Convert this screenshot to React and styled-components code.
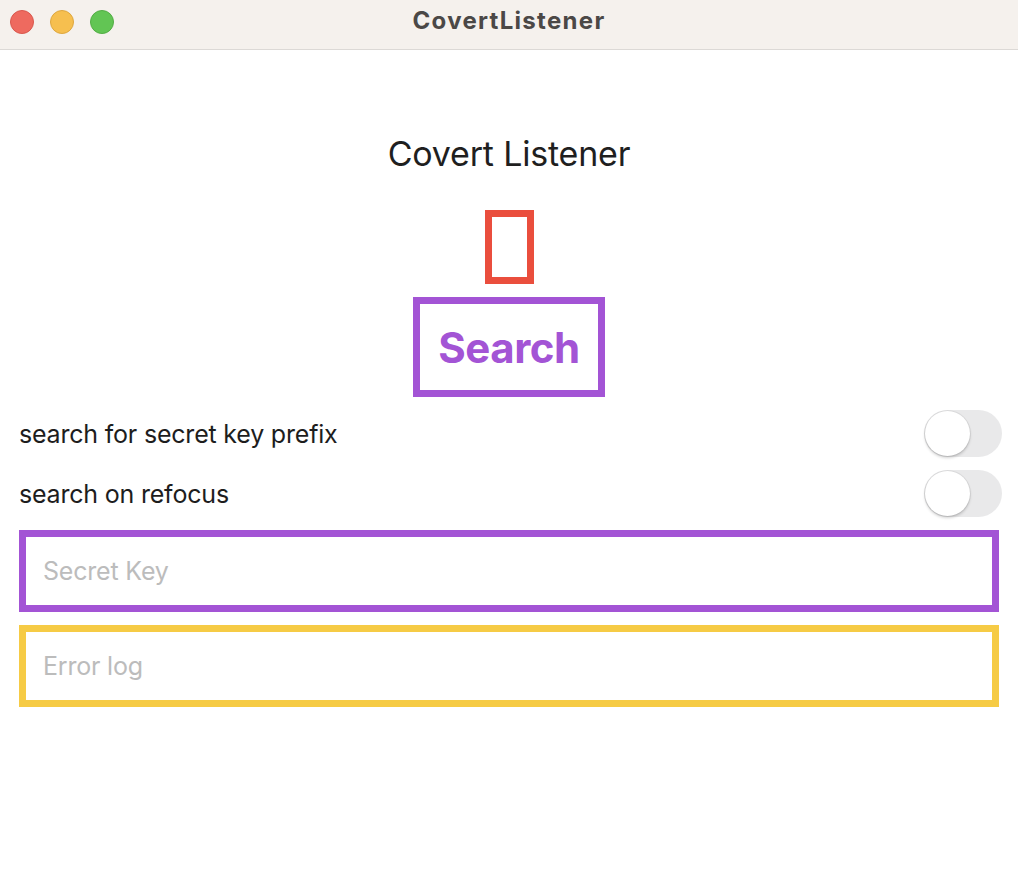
import { useState } from "react";
import styled, { createGlobalStyle } from "styled-components";

const GlobalStyle = createGlobalStyle`
  html, body {
    margin: 0;
    padding: 0;
    background: #ffffff;
  }
  body {
    font-family: Inter, "Liberation Sans", sans-serif;
    -webkit-font-smoothing: antialiased;
  }
`;

const Window = styled.div`
  width: 1018px;
  height: 876px;
  display: flex;
  flex-direction: column;
  background: #ffffff;
  overflow: hidden;
`;

const TitleBar = styled.div`
  height: 50px;
  flex-shrink: 0;
  display: flex;
  align-items: center;
  position: relative;
  background: #f5f1ed;
  border-bottom: 1px solid #dcd9d6;
  box-sizing: border-box;
`;

const Lights = styled.div`
  display: flex;
  gap: 16px;
  padding-left: 10px;
  margin-top: -6px;
`;

const Light = styled.span`
  width: 24px;
  height: 24px;
  border-radius: 50%;
  box-sizing: border-box;
  background: ${(p) => p.$color};
  border: 1px solid ${(p) => p.$edge};
`;

const WindowTitle = styled.div`
  position: absolute;
  left: 0;
  right: 0;
  top: 6px;
  text-align: center;
  font-size: 24px;
  font-weight: 700;
  color: #4b4846;
  letter-spacing: 1.3px;
`;

const Content = styled.main`
  display: flex;
  flex-direction: column;
  align-items: center;
  gap: 13px;
  padding: 83px 19px 0;
`;

const Heading = styled.h1`
  margin: 0 0 22px;
  font-size: 34px;
  font-weight: 400;
  line-height: 42px;
  color: #1f1f1f;
  letter-spacing: -0.2px;
`;

const Placeholder = styled.div`
  width: 49px;
  height: 74px;
  box-sizing: border-box;
  border: 7px solid #ea4e3d;
`;

const SearchButton = styled.button`
  width: 192px;
  height: 100px;
  box-sizing: border-box;
  border: 7px solid #a354d5;
  background: #ffffff;
  color: #a354d5;
  font-family: Inter, "Liberation Sans", sans-serif;
  font-size: 42px;
  font-weight: 700;
  letter-spacing: -0.5px;
  cursor: pointer;
  padding: 0;
`;

const Row = styled.label`
  align-self: stretch;
  display: flex;
  align-items: center;
  justify-content: space-between;
  height: 47px;
  font-size: 25px;
  color: #1d1d1d;
  letter-spacing: -0.2px;
  margin-right: -3px;
`;

const Track = styled.span`
  width: 78px;
  height: 47px;
  border-radius: 24px;
  box-sizing: border-box;
  background: ${(p) => (p.$on ? "#a354d5" : "#e9e9ea")};
  display: flex;
  align-items: center;
  justify-content: ${(p) => (p.$on ? "flex-end" : "flex-start")};
  padding: 1px;
  cursor: pointer;
`;

const Knob = styled.span`
  width: 45px;
  height: 45px;
  border-radius: 50%;
  background: #ffffff;
  box-shadow: 0 0 0 1px rgba(0, 0, 0, 0.06), 0 2px 3px rgba(0, 0, 0, 0.18);
`;

const Field = styled.input`
  align-self: stretch;
  height: 82px;
  box-sizing: border-box;
  border: 7.5px solid ${(p) => p.$color};
  outline: none;
  padding: 0 17px;
  font-family: Inter, "Liberation Sans", sans-serif;
  font-size: 25px;
  color: #1d1d1d;
  background: #ffffff;
  letter-spacing: -0.2px;
  &::placeholder {
    color: #bcbcbc;
  }
`;

function Toggle({ on, onChange }) {
  return (
    <Track $on={on} onClick={onChange}>
      <Knob />
    </Track>
  );
}

export default function App() {
  const [prefix, setPrefix] = useState(false);
  const [refocus, setRefocus] = useState(false);

  return (
    <Window>
      <GlobalStyle />
      <TitleBar>
        <Lights>
          <Light $color="#ee6a5f" $edge="#d9584d" />
          <Light $color="#f6bf4f" $edge="#dea73f" />
          <Light $color="#62c554" $edge="#53ad45" />
        </Lights>
        <WindowTitle>CovertListener</WindowTitle>
      </TitleBar>
      <Content>
        <Heading>Covert Listener</Heading>
        <Placeholder />
        <SearchButton>Search</SearchButton>
        <Row>
          search for secret key prefix
          <Toggle on={prefix} onChange={() => setPrefix(!prefix)} />
        </Row>
        <Row>
          search on refocus
          <Toggle on={refocus} onChange={() => setRefocus(!refocus)} />
        </Row>
        <Field $color="#a354d5" placeholder="Secret Key" />
        <Field $color="#f6cb45" placeholder="Error log" />
      </Content>
    </Window>
  );
}
